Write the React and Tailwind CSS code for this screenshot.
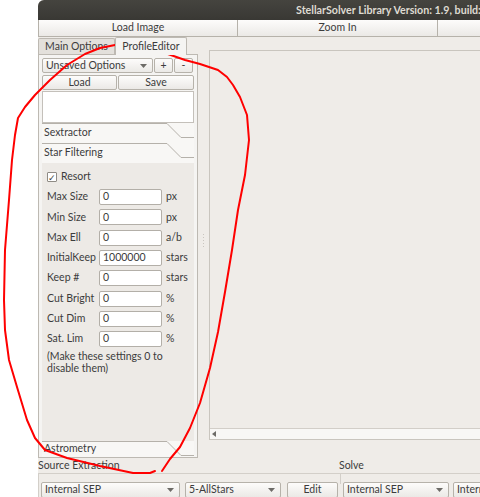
import React from "react";

const base =
  "flex items-center border border-[#b6b2aa] rounded-[2px] bg-gradient-to-b from-[#fdfcfb] to-[#ebe9e6] text-[#3c3c3c]";
const btn = `${base} justify-center`;

function Combo({ label, className }) {
  return (
    <div className={`${base} justify-between px-[3px] ${className}`}>
      <span className="whitespace-nowrap">{label}</span>
      <svg width="7" height="4" viewBox="0 0 7 4" className="mr-[2px] shrink-0">
        <path d="M0 0 H7 L3.5 4 Z" fill="#6d6b67" />
      </svg>
    </div>
  );
}

function ToolboxHeader({ label, h = "h-[20px]" }) {
  return (
    <div className={`relative ${h} shrink-0 bg-[#f8f7f5] flex items-center pl-[2px] overflow-hidden`}>
      <svg className="absolute left-0 top-0" width="152" height="20">
        <path d="M0 0.5 H125 L139 14.5 H152" stroke="#b5b1aa" fill="none" />
      </svg>
      <span className="relative">{label}</span>
    </div>
  );
}

const rows = [
  ["Max Size", "0", "px"],
  ["Min Size", "0", "px"],
  ["Max Ell", "0", "a/b"],
  ["InitialKeep", "1000000", "stars"],
  ["Keep #", "0", "stars"],
  ["Cut Bright", "0", "%"],
  ["Cut Dim", "0", "%"],
  ["Sat. Lim", "0", "%"],
];

const loop = [
  [162, 471], [170, 459], [180, 447], [190, 428], [200, 403], [210, 368], [218, 332],
  [225, 292], [232, 250], [238, 210], [245, 175], [249, 140], [247, 115], [240, 97],
  [233, 85], [227, 77], [218, 70], [200, 64], [185, 60], [165, 53], [147, 47],
  [130, 45], [115, 45], [100, 48], [85, 54], [67, 65], [50, 80], [35, 95], [25, 107],
  [18, 118], [15, 135], [12, 160], [9, 200], [5, 250], [4, 300], [5, 330], [9, 360],
  [17, 387], [27, 420], [35, 438], [45, 450], [67, 458], [100, 466], [133, 473],
  [150, 473], [155, 471],
];

export default function App() {
  return (
    <div className="relative w-[480px] h-[497px] flex bg-white overflow-hidden font-['Lato',sans-serif] text-[10.5px] text-[#3c3c3c]">
      <div className="w-[38px] shrink-0" />
      <div className="w-[442px] shrink-0 flex flex-col bg-[#efece8] rounded-tl-[6px] overflow-hidden">
        {/* title bar */}
        <div className="h-[20px] shrink-0 bg-gradient-to-b from-[#45443f] to-[#393834] flex items-center pl-[258px] whitespace-nowrap overflow-hidden">
          <span className="font-bold text-[10.7px] text-[#dfdbd2]">StellarSolver Library Version: 1.9, build:</span>
        </div>
        {/* toolbar */}
        <div className="h-[17px] shrink-0 flex">
          <div className={`${btn} w-[200px] shrink-0 rounded-none border-t-0`}>Load Image</div>
          <div className={`${btn} w-[200px] shrink-0 rounded-none border-t-0 border-l-0`}>Zoom In</div>
          <div className={`${btn} w-[60px] shrink-0 rounded-none border-t-0 border-l-0`} />
        </div>
        {/* main */}
        <div className="h-[421px] shrink-0 flex">
          <div className="w-[160px] shrink-0 flex flex-col">
            <div className="h-[17px] shrink-0 flex items-end">
              <div className="w-[77px] h-[16px] bg-[#e3e0db] border border-b-0 border-[#bdb9b2] rounded-t-[2px] flex items-center justify-center">
                Main Options
              </div>
              <div className="relative z-10 w-[72px] h-[18px] -mb-[1px] bg-[#f5f4f2] border border-b-0 border-[#bdb9b2] rounded-t-[2px] flex items-center justify-center">
                ProfileEditor
              </div>
            </div>
            <div className="h-[404px] border border-[#bdb9b2] bg-[#f5f4f2] px-[3px] pt-[3px] flex flex-col">
              <div className="flex h-[15px] gap-[1px] shrink-0">
                <Combo label="Unsaved Options" className="w-[111px]" />
                <div className={`${btn} w-[19px]`}>+</div>
                <div className={`${btn} w-[19px]`}>-</div>
              </div>
              <div className="flex h-[15px] mt-[2px] gap-[1px] shrink-0">
                <div className={`${btn} w-[75px]`}>Load</div>
                <div className={`${btn} flex-1`}>Save</div>
              </div>
              <div className="h-[32px] mt-[1px] shrink-0 bg-white border border-[#c4c0ba]" />
              <ToolboxHeader label="Sextractor" />
              <ToolboxHeader label="Star Filtering" />
              <div className="flex-1 bg-[#edeae6] flex flex-col pt-[7px] pl-[5px]">
                <div className="h-[14px] flex items-center gap-[4px]">
                  <div className="w-[10px] h-[10px] bg-white border border-[#8f8b85] rounded-[1px] flex items-center justify-center text-[9px] leading-none">
                    ✓
                  </div>
                  <span>Resort</span>
                </div>
                <div className="mt-[3px] flex flex-col">
                  {rows.map(([label, val, unit]) => (
                    <div key={label} className="h-[20.3px] flex items-center">
                      <span className="w-[52px] shrink-0 whitespace-nowrap">{label}</span>
                      <div className="w-[63px] h-[16px] bg-white border border-[#b3afa8] rounded-[2px] flex items-center px-[3px]">
                        {val}
                      </div>
                      <span className="ml-[4px]">{unit}</span>
                    </div>
                  ))}
                </div>
                <div className="mt-[2px] leading-[11.5px] w-[130px]">
                  (Make these settings 0 to disable them)
                </div>
              </div>
              <ToolboxHeader label="Astrometry" h="h-[16px]" />
            </div>
          </div>
          {/* splitter */}
          <div className="w-[11px] shrink-0 flex items-center justify-center">
            <div className="flex flex-col gap-[2px] -mt-[14px]">
              <div className="w-[1px] h-[1px] bg-[#c9c5bf]" />
              <div className="w-[1px] h-[1px] bg-[#c9c5bf]" />
              <div className="w-[1px] h-[1px] bg-[#c9c5bf]" />
              <div className="w-[1px] h-[1px] bg-[#c9c5bf]" />
              <div className="w-[1px] h-[1px] bg-[#c9c5bf]" />
            </div>
          </div>
          {/* image area */}
          <div className="flex-1 flex flex-col pt-[13px] pb-[18px]">
            <div className="flex-1 border border-r-0 border-[#c9c5be] bg-[#efece8] flex flex-col justify-end">
              <div className="h-[11px] border-t border-[#d2cec8] bg-[#f8f7f5] flex items-center pl-[2px]">
                <svg width="4" height="6" viewBox="0 0 4 6">
                  <path d="M4 0 V6 L0 3 Z" fill="#6d6b67" />
                </svg>
              </div>
            </div>
          </div>
        </div>
        {/* bottom */}
        <div className="h-[15px] shrink-0 flex items-center">
          <span className="w-[301px] shrink-0">Source Extraction</span>
          <span>Solve</span>
        </div>
        <div className="flex-1 border-t border-l border-[#d3cfc9] flex items-start pt-[8px] pl-[2px]">
          <Combo label="Internal SEP" className="w-[139px] h-[16px] shrink-0" />
          <Combo label="5-AllStars" className="w-[96px] h-[16px] shrink-0 ml-[5px]" />
          <div className={`${btn} w-[51px] h-[16px] shrink-0 ml-[6px]`}>Edit</div>
          <div className="w-[1px] h-[10px] -mt-[8px] bg-[#d3cfc9] shrink-0 ml-[2px]" />
          <Combo label="Internal SEP" className="w-[106px] h-[16px] shrink-0 ml-[2px]" />
          <div className={`${base} justify-start px-[3px] w-[40px] h-[16px] shrink-0 ml-[4px] overflow-hidden`}>Intern</div>
        </div>
      </div>
      <svg className="absolute inset-0 pointer-events-none" width="480" height="497">
        <polyline
          points={loop.map((p) => p.join(",")).join(" ")}
          fill="none"
          stroke="#ff0000"
          strokeWidth="2"
          strokeLinejoin="round"
          strokeLinecap="round"
        />
      </svg>
    </div>
  );
}
